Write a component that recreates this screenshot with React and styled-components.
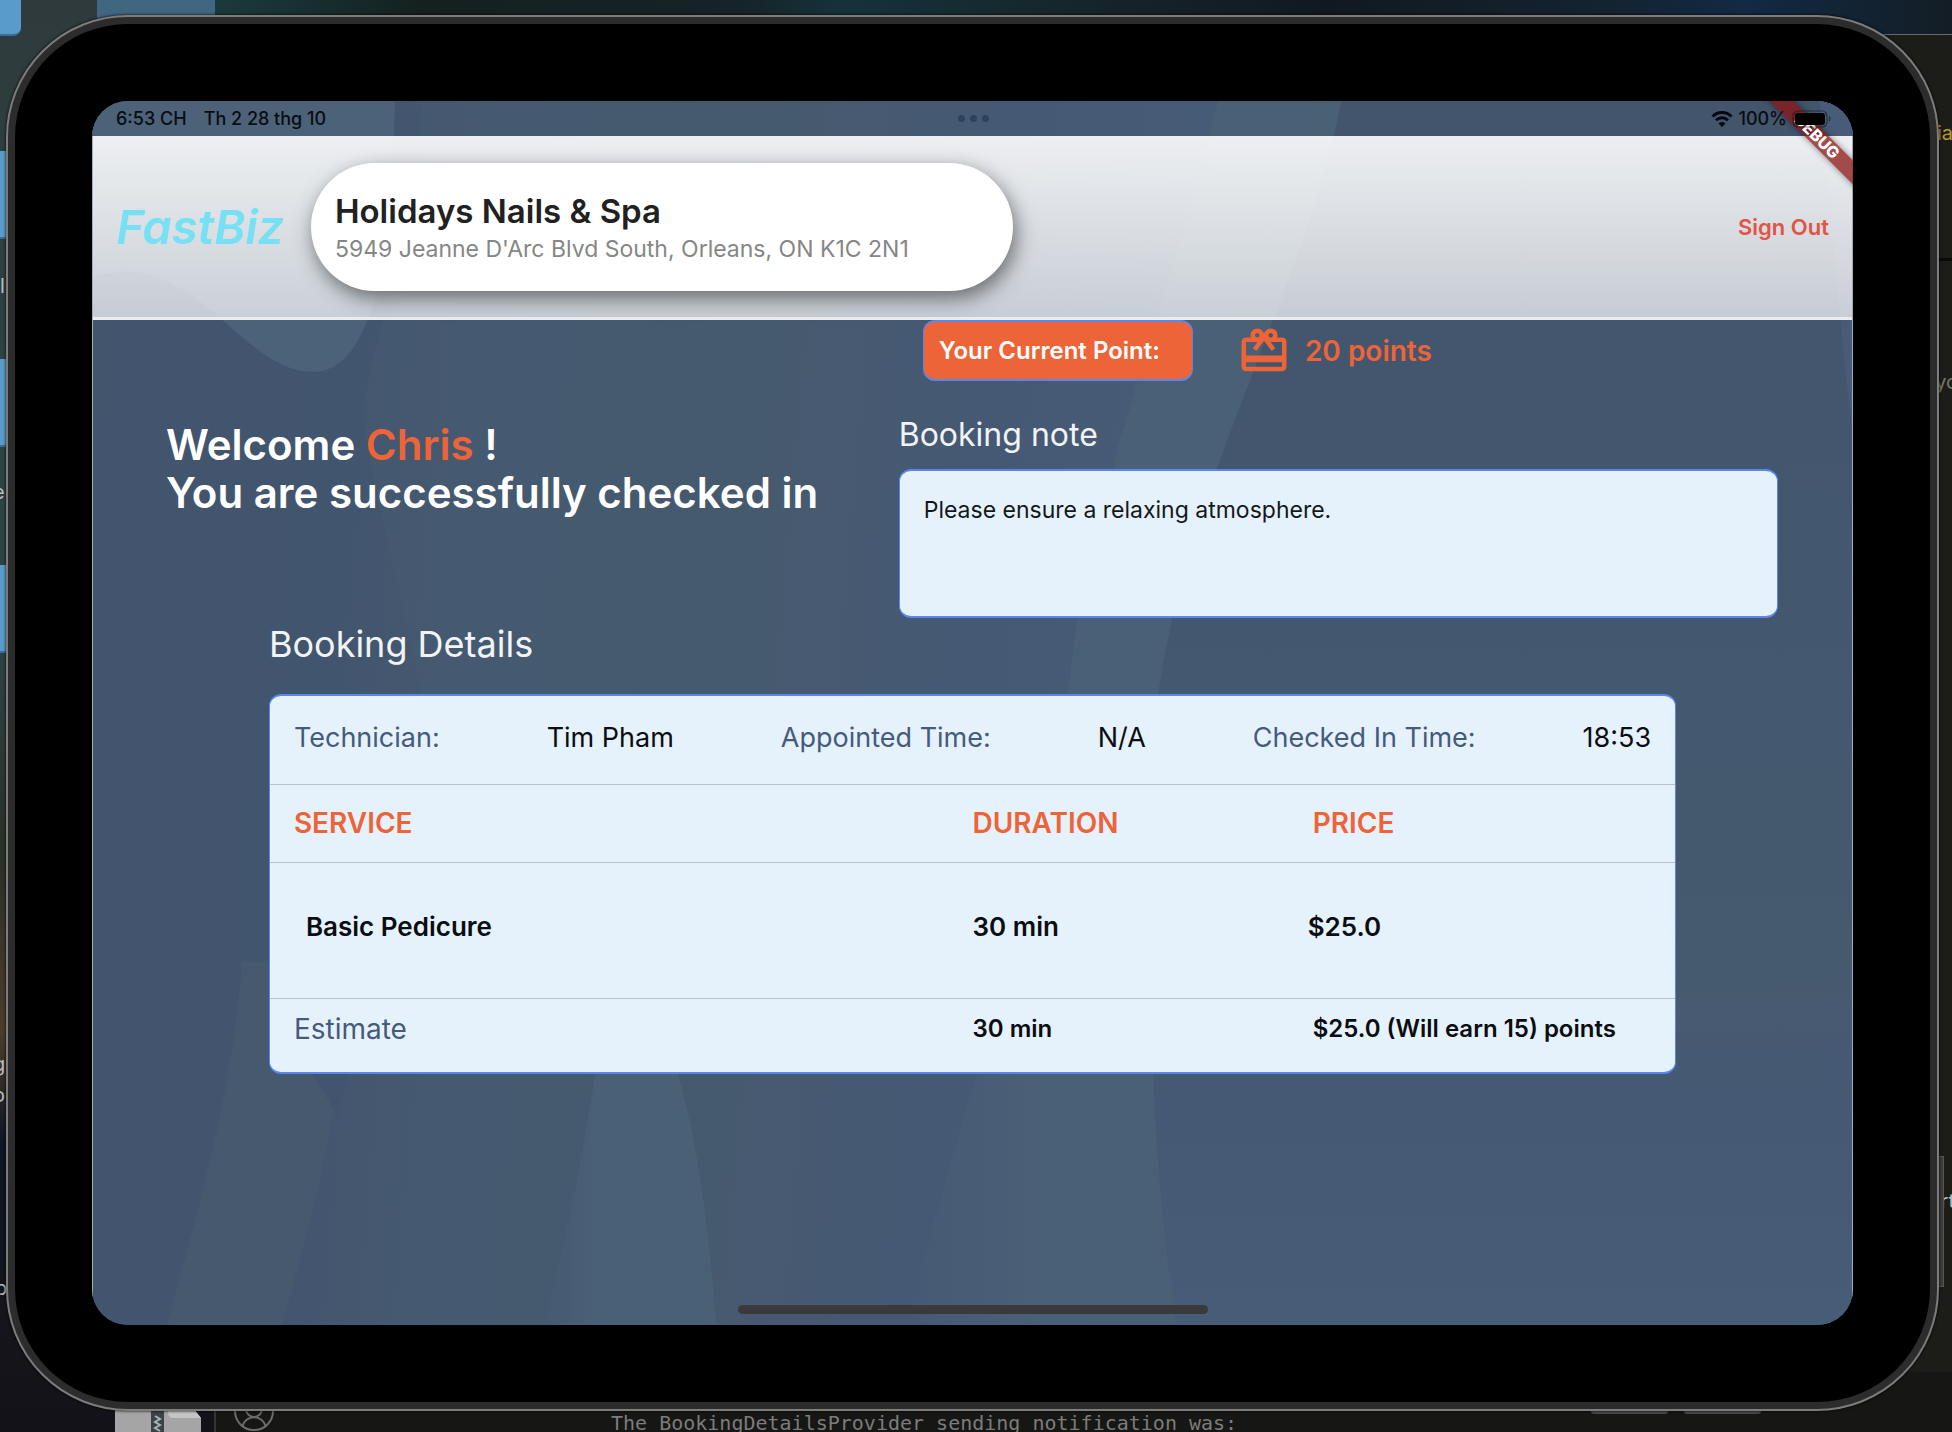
import React from "react";
import styled, { createGlobalStyle } from "styled-components";
import { MdCardGiftcard } from "react-icons/md";

const orange = "#ec6437";
const slate = "#465a7c";
const panel = "#e5f2fc";
const outline = "#5a86ee";

const GlobalStyle = createGlobalStyle`
  *, *::before, *::after { box-sizing: border-box; }
  body {
    margin: 0;
    background: #15171b;
    font-family: Inter, "Liberation Sans", sans-serif;
  }
  h1, h2, p, dl, dd { margin: 0; font-weight: inherit; }
`;

/* Desktop behind the simulator */
const Desktop = styled.div`
  position: relative;
  display: flex;
  min-height: 100vh;
  padding: 15px 13px 21px 6px;
  overflow: hidden;
  background: linear-gradient(180deg, #2f3a3c 0, #2c4344 28%, #2c4344 45%, #2a2f27 60%, #4c3d2b 72%, #0c1523 80%, #16151b 92%, #131218 100%);
`;

const Backdrop = styled.div`
  position: absolute;
  inset: 0;
`;

const Wallpaper = styled.div`
  position: absolute;
  inset: 0 0 auto 215px;
  height: 34px;
  background: linear-gradient(90deg, #1b3a3c 0, #14211f 12%, #162327 30%, #15323a 36%, #16252a 50%, #111920 64%, #14232f 80%, #122a44 88%, #131d25 100%);
`;

const Folder = styled.div`
  position: absolute;
  left: ${(p) => p.$x}px;
  top: ${(p) => p.$y}px;
  width: ${(p) => p.$w}px;
  height: ${(p) => p.$h}px;
  border-radius: 0 0 8px 0;
  background: ${(p) => (p.$dim ? "#41667f" : "#5a9cc9")};
  border-bottom: 2px solid ${(p) => (p.$dim ? "#35566d" : "#34719c")};
`;

const EditorWindow = styled.div`
  position: absolute;
  background: #1c1d19;
`;

const EditorRight = styled(EditorWindow)`
  top: 34px;
  right: 0;
  bottom: 0;
  width: 200px;
  border-top: 1px solid #6a6a6a;
`;

const EditorBottom = styled(EditorWindow)`
  left: 214px;
  right: 0;
  bottom: 0;
  height: 60px;
  background: #161614;
  border-left: 2px solid #333331;
`;

const EditorDivider = styled.div`
  position: absolute;
  right: 0;
  top: 258px;
  width: 60px;
  height: 3px;
  background: #0a0a0a;
`;

const Scrap = styled.span`
  position: absolute;
  top: ${(p) => p.$y}px;
  left: ${(p) => p.$left};
  right: ${(p) => p.$right};
  font-size: 20px;
  line-height: 24px;
  white-space: nowrap;
  color: ${(p) => p.$color || "#b9bdbd"};
`;

const LogLine = styled.p`
  position: absolute;
  left: 611px;
  bottom: -3px;
  font: 20px/24px "DejaVu Sans Mono", monospace;
  color: #7c7c7c;
  white-space: pre;
`;

const FileIcon = styled.svg`
  position: absolute;
  left: 115px;
  bottom: 0;
`;

const AccountIcon = styled.svg`
  position: absolute;
  left: 233px;
  bottom: 0;
`;

const SideKey = styled.div`
  position: absolute;
  right: 8px;
  top: 1156px;
  width: 10px;
  height: 131px;
  background: #3d3d3d;
  border: 1px solid #555;
`;

const BottomKey = styled.div`
  position: absolute;
  right: ${(p) => p.$right}px;
  bottom: 18px;
  width: 77px;
  height: 8px;
  border-radius: 3px;
  background: #4a4a4a;
`;

/* Tablet frame */
const Tablet = styled.div`
  position: relative;
  flex: 1;
  display: flex;
  border: 2px solid #7c7c7c;
  border-radius: 122px;
  background: #2c2c2c;
  box-shadow: 0 0 3px #000;
`;

const Bezel = styled.div`
  flex: 1;
  display: flex;
  margin: 7px;
  padding: 77px;
  border-radius: 113px;
  background: #000;
`;

const Screen = styled.div`
  position: relative;
  isolation: isolate;
  flex: 1;
  display: flex;
  flex-direction: column;
  overflow: hidden;
  border-radius: 36px;
  background: #43576f;
`;

const Waves = styled.svg`
  position: absolute;
  inset: 0;
  z-index: -1;
  width: 100%;
  height: 100%;
`;

const StatusBar = styled.div`
  position: relative;
  z-index: 3;
  display: grid;
  grid-template-columns: 1fr auto 1fr;
  align-items: center;
  height: 35px;
  padding: 0 22px 0 24px;
  font-size: 18px;
  font-weight: 500;
  color: #0a0c10;
`;

const StatusGroup = styled.div`
  display: flex;
  align-items: center;
  justify-content: ${(p) => (p.$end ? "flex-end" : "flex-start")};
  gap: ${(p) => (p.$end ? 5 : 17)}px;
`;

const Dots = styled.div`
  display: flex;
  gap: 5px;
`;

const Dot = styled.i`
  width: 7px;
  height: 7px;
  border-radius: 50%;
  background: #2c4260;
`;

const DebugBanner = styled.div`
  position: absolute;
  z-index: 2;
  top: 27px;
  right: -34px;
  width: 140px;
  transform: rotate(45deg);
  background: rgba(140, 20, 20, 0.75);
  box-shadow: 0 0 6px rgba(0, 0, 0, 0.45);
  color: #fff;
  font-size: 16px;
  font-weight: 800;
  line-height: 17px;
  text-align: center;
`;

const Frame = styled.div`
  flex: 1;
  display: flex;
  flex-direction: column;
  border: solid #a4afbc;
  border-width: 0 1px;
`;

const Header = styled.header`
  display: flex;
  align-items: center;
  gap: 27px;
  height: 184px;
  padding: 0 23px;
  border-bottom: 3px solid #e9ecf0;
  background: linear-gradient(180deg, rgba(255, 255, 255, 0.9), rgba(255, 255, 255, 0.7));
`;

const Brand = styled.div`
  font-size: 47px;
  font-style: italic;
  font-weight: 600;
  color: #76e0f5;
`;

const Shop = styled.div`
  display: flex;
  flex-direction: column;
  justify-content: center;
  width: 41%;
  height: 128px;
  padding: 0 24px;
  border-radius: 64px;
  background: #fff;
  box-shadow: 3px 7px 20px rgba(0, 0, 0, 0.5);
`;

const ShopName = styled.h1`
  font-size: 33px;
  font-weight: 600;
  line-height: 44px;
  color: #212121;
`;

const ShopAddress = styled.p`
  font-size: 23px;
  line-height: 32px;
  color: #868686;
`;

const SignOut = styled.button`
  margin-left: auto;
  padding: 0;
  border: 0;
  background: none;
  font: 600 22px/28px Inter, sans-serif;
  color: #e25444;
  cursor: pointer;
`;

const Main = styled.main`
  flex: 1;
`;

const Intro = styled.section`
  display: grid;
  grid-template-columns: 5fr 6fr;
  row-gap: 34px;
  padding: 0 74px 0 73px;
`;

const Points = styled.div`
  grid-column: 2;
  display: flex;
  align-items: center;
  padding-left: 24px;
  font-size: 28px;
  font-weight: 600;
  color: ${orange};
`;

const PointsButton = styled.button`
  height: 61px;
  margin-right: 44px;
  padding: 0 32px 0 15px;
  border: solid ${outline};
  border-width: 2px 1px;
  border-radius: 12px;
  background: ${orange};
  font: 600 24px/28px Inter, sans-serif;
  color: #fff;
`;

const GiftIcon = styled(MdCardGiftcard)`
  width: 54px;
  height: 54px;
  margin-right: 14px;
`;

const Welcome = styled.p`
  padding-top: 6px;
  font-size: 42px;
  font-weight: 600;
  line-height: 48px;
  color: #fff;
`;

const Accent = styled.span`
  color: ${orange};
`;

const NoteLabel = styled.label`
  display: block;
  margin-bottom: 14px;
  font-size: 32px;
  line-height: 40px;
  color: #f1f4f7;
`;

const Note = styled.textarea`
  display: block;
  width: 100%;
  height: 149px;
  padding: 25px 24px;
  border: solid ${outline};
  border-width: 2px 1px;
  border-radius: 12px;
  outline: 0;
  resize: none;
  background: ${panel};
  font: 23px/28px Inter, sans-serif;
  color: #15181b;
`;

const Details = styled.section`
  width: 80%;
  margin: 2px auto 0;
`;

const DetailsTitle = styled.h2`
  margin-bottom: 26px;
  font-size: 36px;
  line-height: 48px;
  color: #f1f4f7;
`;

const Card = styled.div`
  border: solid ${outline};
  border-width: 2px 1px;
  border-radius: 12px;
  background: ${panel};
`;

const Facts = styled.dl`
  display: flex;
  justify-content: space-between;
  padding: 28px 24px 32px;
  border-bottom: 1px solid #b9c1cb;
  font-size: 27px;
  line-height: 28px;
  color: #0b0d10;
`;

const FactName = styled.dt`
  color: ${slate};
`;

const Services = styled.table`
  width: 100%;
  table-layout: fixed;
  border-collapse: collapse;
  line-height: 28px;
  text-align: left;
`;

const Column = styled.col`
  width: ${(p) => p.$width};
`;

const HeadCell = styled.th`
  padding: 24px 0 25px ${(p) => p.$indent}px;
  border-bottom: 1px solid #b9c1cb;
  font-size: 28px;
  font-weight: 600;
  color: ${orange};
`;

const Cell = styled.td`
  padding: 50px 0 57px ${(p) => p.$indent}px;
  border-bottom: 1px solid #b9c1cb;
  font-size: 26px;
  font-weight: 600;
  color: #0b0d10;
`;

const FootCell = styled.td`
  padding: 16px 0 29px ${(p) => p.$indent}px;
  font-size: ${(p) => (p.$label ? 28 : 24)}px;
  font-weight: ${(p) => (p.$label ? 400 : 600)};
  color: ${(p) => (p.$label ? slate : "#0b0d10")};
  white-space: nowrap;
`;

const HomeIndicator = styled.div`
  position: absolute;
  left: 50%;
  bottom: 11px;
  width: 470px;
  height: 9px;
  margin-left: -235px;
  border-radius: 5px;
  background: #3b3a3a;
`;

const facts = [
  ["Technician:", "Tim Pham"],
  ["Appointed Time:", "N/A"],
  ["Checked In Time:", "18:53"],
];

const services = [{ name: "Basic Pedicure", duration: "30 min", price: "$25.0" }];

function Wifi() {
  return (
    <svg width="22" height="16" viewBox="0 0 22 16" fill="none" stroke="#05070a" strokeWidth="3">
      <path d="M1.5 5.5a13.5 13.5 0 0 1 19 0" />
      <path d="M5 9.3a8.6 8.6 0 0 1 12 0" />
      <path d="M11 16l-3.4-3.6a4.8 4.8 0 0 1 6.8 0z" fill="#05070a" stroke="none" />
    </svg>
  );
}

function Battery() {
  return (
    <svg width="39" height="18" viewBox="0 0 39 18">
      <rect x="1" y="1" width="34" height="16" rx="5" fill="none" stroke="#05070a" strokeOpacity=".5" strokeWidth="1.2" />
      <rect x="3" y="3" width="30" height="12" rx="3" fill="#000" />
      <path d="M37 6v6c2-1 2-5 0-6z" fill="#05070a" fillOpacity=".5" />
    </svg>
  );
}

function WaveBackground() {
  return (
    <Waves viewBox="0 0 1761 1224" preserveAspectRatio="none" aria-hidden="true">
      <defs>
        <linearGradient id="sweep" x1="0" x2="1" y1="0" y2="0.06">
          <stop offset="0" stopColor="#42556d" />
          <stop offset=".16" stopColor="#42556e" />
          <stop offset=".24" stopColor="#455970" />
          <stop offset=".38" stopColor="#465a6e" />
          <stop offset=".52" stopColor="#465974" />
          <stop offset=".62" stopColor="#465b75" />
        </linearGradient>
        <linearGradient id="rightSide" x1="0" x2="0" y1="0" y2="1">
          <stop offset="0" stopColor="#42556d" />
          <stop offset=".4" stopColor="#43576f" />
          <stop offset=".7" stopColor="#465a6e" />
          <stop offset=".82" stopColor="#465974" />
          <stop offset="1" stopColor="#475c76" />
        </linearGradient>
        <linearGradient id="band" x1="0" x2="1" y1="0" y2="0">
          <stop offset="0" stopColor="#4a6076" stopOpacity="0" />
          <stop offset=".3" stopColor="#4a6076" />
          <stop offset="1" stopColor="#4a6075" />
        </linearGradient>
      </defs>
      <rect width="1761" height="1224" fill="url(#sweep)" />
      <path d="M150 860C140 1000 100 1130 75 1224H190C215 1130 240 1060 262 860z" fill="#46596f" />
      <path d="M1249 0C1215 190 1080 400 1061 640V975Q1066 1100 1084 1224H1761V0z" fill="url(#rightSide)" />
      <path d="M1126 0H1249C1215 190 1080 400 1061 640V975Q1066 1100 1084 1224H815C870 1000 960 760 985 520 1020 330 1090 160 1126 0z" fill="url(#band)" />
      <path d="M545 860C600 980 615 1100 624 1224H450C480 1130 500 1000 520 860z" fill="url(#band)" />
      <path d="M330 0C320 160 270 260 272 320C280 400 330 560 345 700H430C410 460 440 200 470 0z" fill="#46596f" opacity=".5" />
      <path d="M195 860V930L247 1017 262 930V860z" fill="#42556e" />
      <path d="M0 0H303C300 140 285 271 221 271C160 271 120 185 50 172Q25 168 0 176z" fill="#4c6279" />
      <path d="M1727 0C1735 40 1745 220 1761 330V0z" fill="#485b78" />
    </Waves>
  );
}

export default function App() {
  return (
    <Desktop>
      <GlobalStyle />
      <Backdrop aria-hidden="true">
        <Wallpaper />
        <Folder $x={0} $y={0} $w={21} $h={36} />
        <Folder $x={97} $y={0} $w={118} $h={60} $dim />
        <Folder $x={0} $y={151} $w={12} $h={88} />
        <Folder $x={0} $y={359} $w={12} $h={88} />
        <Folder $x={0} $y={565} $w={12} $h={88} />
        <Scrap $y={274} $left="0">l</Scrap>
        <Scrap $y={480} $left="-7px">e</Scrap>
        <Scrap $y={1052} $left="-7px">g</Scrap>
        <Scrap $y={1083} $left="-7px">o</Scrap>
        <Scrap $y={1276} $left="-5px">p</Scrap>
        <EditorRight />
        <EditorBottom />
        <EditorDivider />
        <Scrap $y={121} $right="-1px" $color="#b79a2c">cia</Scrap>
        <Scrap $y={370} $right="-6px" $color="#77786a">yo</Scrap>
        <Scrap $y={1189} $right="-3px">rt</Scrap>
        <SideKey />
        <BottomKey $right={284} />
        <BottomKey $right={191} />
        <FileIcon width="86" height="24" viewBox="0 0 86 24">
          <path d="M0 0H78L86 10V24H0z" fill="#a5a5a5" />
          <path d="M53 0H78L86 10H58Q53 10 53 4z" fill="#c4c4c4" />
          <rect x="36" width="13" height="24" fill="#3c4246" />
          <path d="M40 8l5 3-5 3 5 3-5 3 5 3" fill="none" stroke="#a9b4ba" strokeWidth="2" />
        </FileIcon>
        <AccountIcon width="42" height="42" viewBox="0 0 42 42" fill="none" stroke="#6c6c6a" strokeWidth="2">
          <circle cx="21" cy="21" r="19" />
          <circle cx="21" cy="19" r="8" />
          <path d="M9 37C12 24 30 24 33 37" />
        </AccountIcon>
        <LogLine>The BookingDetailsProvider sending notification was:</LogLine>
      </Backdrop>

      <Tablet>
        <Bezel>
          <Screen>
            <WaveBackground />
            <StatusBar>
              <StatusGroup>
                <span>6:53 CH</span>
                <span>Th 2 28 thg 10</span>
              </StatusGroup>
              <Dots>
                <Dot />
                <Dot />
                <Dot />
              </Dots>
              <StatusGroup $end>
                <Wifi />
                <span>100%</span>
                <Battery />
              </StatusGroup>
            </StatusBar>
            <DebugBanner>DEBUG</DebugBanner>

            <Frame>
              <Header>
                <Brand>FastBiz</Brand>
                <Shop>
                  <ShopName>Holidays Nails &amp; Spa</ShopName>
                  <ShopAddress>5949 Jeanne D'Arc Blvd South, Orleans, ON K1C 2N1</ShopAddress>
                </Shop>
                <SignOut type="button">Sign Out</SignOut>
              </Header>

              <Main>
                <Intro>
                  <Points>
                    <PointsButton type="button">Your Current Point:</PointsButton>
                    <GiftIcon aria-hidden="true" />
                    <span>20 points</span>
                  </Points>
                  <Welcome>
                    Welcome <Accent>Chris</Accent> !<br />
                    You are successfully checked in
                  </Welcome>
                  <div>
                    <NoteLabel htmlFor="note">Booking note</NoteLabel>
                    <Note id="note" readOnly defaultValue="Please ensure a relaxing atmosphere." />
                  </div>
                </Intro>

                <Details>
                  <DetailsTitle>Booking Details</DetailsTitle>
                  <Card>
                    <Facts>
                      {facts.map(([name, value]) => (
                        <React.Fragment key={name}>
                          <FactName>{name}</FactName>
                          <dd>{value}</dd>
                        </React.Fragment>
                      ))}
                    </Facts>
                    <Services>
                      <colgroup>
                        <Column $width="50%" />
                        <Column $width="23%" />
                        <Column $width="27%" />
                      </colgroup>
                      <thead>
                        <tr>
                          <HeadCell $indent={24}>SERVICE</HeadCell>
                          <HeadCell $indent={0}>DURATION</HeadCell>
                          <HeadCell $indent={17}>PRICE</HeadCell>
                        </tr>
                      </thead>
                      <tbody>
                        {services.map((s) => (
                          <tr key={s.name}>
                            <Cell $indent={36}>{s.name}</Cell>
                            <Cell $indent={0}>{s.duration}</Cell>
                            <Cell $indent={12}>{s.price}</Cell>
                          </tr>
                        ))}
                      </tbody>
                      <tfoot>
                        <tr>
                          <FootCell $indent={24} $label>Estimate</FootCell>
                          <FootCell $indent={0}>30 min</FootCell>
                          <FootCell $indent={17}>$25.0 (Will earn 15) points</FootCell>
                        </tr>
                      </tfoot>
                    </Services>
                  </Card>
                </Details>
              </Main>
            </Frame>
            <HomeIndicator />
          </Screen>
        </Bezel>
      </Tablet>
    </Desktop>
  );
}
